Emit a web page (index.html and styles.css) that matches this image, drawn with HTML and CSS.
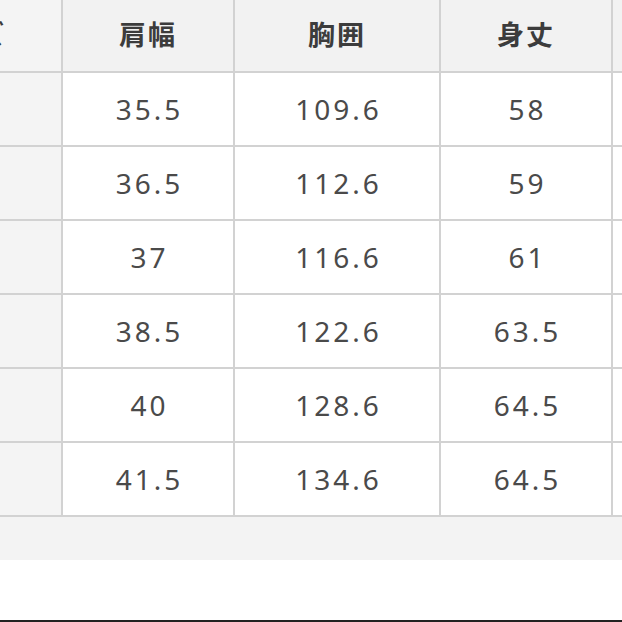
FILE: index.html
```html
<!DOCTYPE html>
<html lang="ja">
<head>
<meta charset="utf-8">
<title>サイズ表</title>
<link rel="stylesheet" href="styles.css">
</head>
<body>
<div class="page">
  <div class="sheet">
    <div class="grid">
      <div class="cell head side">サイズ</div>
      <div class="cell head">肩幅</div>
      <div class="cell head">胸囲</div>
      <div class="cell head">身丈</div>
      <div class="cell head"></div>

      <div class="cell side"></div>
      <div class="cell">35.5</div>
      <div class="cell">109.6</div>
      <div class="cell">58</div>
      <div class="cell"></div>

      <div class="cell side"></div>
      <div class="cell">36.5</div>
      <div class="cell">112.6</div>
      <div class="cell">59</div>
      <div class="cell"></div>

      <div class="cell side"></div>
      <div class="cell">37</div>
      <div class="cell">116.6</div>
      <div class="cell">61</div>
      <div class="cell"></div>

      <div class="cell side"></div>
      <div class="cell">38.5</div>
      <div class="cell">122.6</div>
      <div class="cell">63.5</div>
      <div class="cell"></div>

      <div class="cell side"></div>
      <div class="cell">40</div>
      <div class="cell">128.6</div>
      <div class="cell">64.5</div>
      <div class="cell"></div>

      <div class="cell side"></div>
      <div class="cell">41.5</div>
      <div class="cell">134.6</div>
      <div class="cell">64.5</div>
      <div class="cell"></div>
    </div>
    <div class="band"></div>
  </div>
  <div class="blank"></div>
  <div class="bar"></div>
</div>
</body>
</html>
```

FILE: styles.css
```css
html, body {
  margin: 0;
  padding: 0;
  background: #ffffff;
}

.page {
  width: 622px;
  height: 622px;
  overflow: hidden;
  display: flex;
  flex-direction: column;
}

.sheet {
  background: #f3f3f3;
}

.grid {
  display: grid;
  grid-template-columns: 196px 170px 204px 170px 170px;
  grid-template-rows: 71px repeat(6, 72px);
  gap: 2px;
  padding-bottom: 2px;
  background: #d2d2d2;
  width: max-content;
  margin-left: -135px;
}

.cell {
  background: #ffffff;
  display: flex;
  align-items: center;
  justify-content: center;
  color: #4a4a4a;
  font-family: "Noto Sans", "Noto Sans CJK JP", sans-serif;
  font-size: 28px;
  letter-spacing: 3px;
  padding-left: 3px;
}

.head {
  background: #f2f2f2;
  color: #3c3c3c;
  font-family: "Noto Sans CJK JP", sans-serif;
  font-weight: 700;
  font-size: 27px;
  letter-spacing: 2px;
  padding-bottom: 4px;
  padding-left: 0;
}

.side {
  background: #f4f4f4;
}

.band {
  height: 43px;
}

.blank {
  flex: 1;
  background: #ffffff;
}

.bar {
  height: 2px;
  background: #222222;
}
```
